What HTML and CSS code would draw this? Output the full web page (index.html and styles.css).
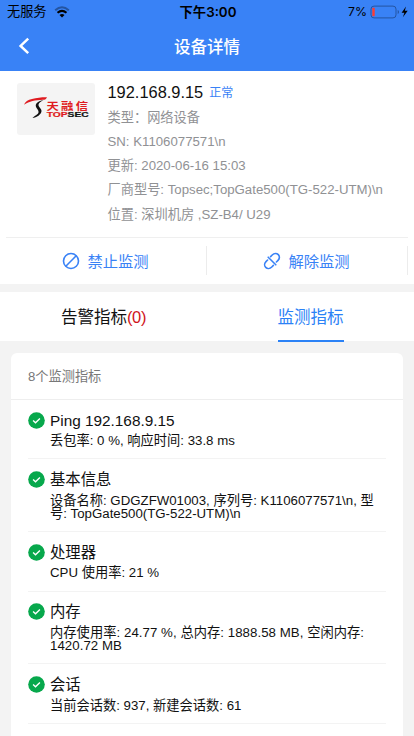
FILE: index.html
```html
<!DOCTYPE html>
<html lang="zh-CN">
<head>
<meta charset="utf-8">
<meta name="viewport" content="width=device-width, initial-scale=1">
<title>设备详情</title>
<link rel="stylesheet" href="styles.css">
</head>
<body>
<header class="header">
  <div class="status">
    <div class="status-left"><span>无服务</span>
      <svg width="16" height="12" viewBox="0 0 16 12" fill="none"><path d="M1.2 4.2Q8-1.8 14.8 4.2" stroke="#2455a2" stroke-width="2"/><path d="M3.5 6.8Q8 3 12.5 6.8" stroke="#000" stroke-width="2"/><path d="M5.5 9Q8 7 10.5 9L8 11.6Z" fill="#000"/></svg>
    </div>
    <div class="status-time">下午3:00</div>
    <div class="status-right"><span>7%</span>
      <svg width="39" height="14" viewBox="0 0 39 14"><rect x="1" y="1.1" width="25" height="11.8" rx="3" fill="none" stroke="#2455a2" stroke-width="1"/><rect x="2.3" y="2.8" width="2.4" height="8.4" rx=".6" fill="#ff3b30"/><path d="M27.7 5v4q1.3-.5 1.3-2t-1.3-2z" fill="#2455a2"/><path d="M36 1.5l-4.4 6.2h2.8L32.9 12.2l4.8-6.4h-2.9z" fill="#000"/></svg>
    </div>
  </div>
  <div class="nav">
    <svg class="back" width="12" height="18" viewBox="0 0 12 18"><path d="M10.2 1.6L2.6 8.9l7.6 7.3" fill="none" stroke="#fff" stroke-width="2.5"/></svg>
    <h1>设备详情</h1>
  </div>
</header>

<section class="device">
  <div class="logo">
    <svg width="78" height="52" viewBox="0 0 78 52">
      <path d="M7 21.8C8 18.5 11 17 15 16C20 14.7 26 14 30 14.2C29.5 15.8 28 16.8 26 16.8C18 17 12.5 18.5 7 21.8Z" fill="#df1b20"/>
      <path d="M26.5 17C21 18 18.5 20.5 18.8 23C19.2 25.5 22 27 21.5 29.5C21 31.8 17.5 32.5 15.5 35C19.5 34.5 24.5 31.5 24.5 28C24.5 25.5 21.3 24 21.5 21.5C21.7 19.5 24.5 18.5 26.5 17Z" fill="#111"/>
      <text class="brand-cn" transform="translate(29.5 27.3) scale(1.24 1)">天融信</text>
      <text class="brand-en" x="29.7" y="34.2" textLength="42" lengthAdjust="spacingAndGlyphs"><tspan class="brand-red">TOP</tspan><tspan>SEC</tspan></text>
    </svg>
  </div>
  <div class="info">
    <div class="ip"><span>192.168.9.15</span><span class="state">正常</span></div>
    <p>类型：网络设备</p>
    <p>SN: K1106077571\n</p>
    <p>更新: 2020-06-16 15:03</p>
    <p>厂商型号: Topsec;TopGate500(TG-522-UTM)\n</p>
    <p>位置: 深圳机房 ,SZ-B4/ U29</p>
  </div>
</section>

<div class="actions">
  <a class="action"><svg width="18" height="18" viewBox="0 0 18 18" fill="none" stroke="#3982f6" stroke-width="1.6"><circle cx="9" cy="9" r="7.5"/><path d="M3.8 14.2L14.2 3.8"/></svg><span>禁止监测</span></a>
  <a class="action"><svg width="18" height="18" viewBox="0 0 18 18" fill="none" stroke="#3982f6" stroke-width="1.6" stroke-linecap="round"><path d="M7.6 4.6l1.6-1.6c2-2 4.6-1.9 6.1-.4s1.5 4-.3 5.8l-1.6 1.6"/><path d="M10.4 13.4l-1.6 1.6c-2 2-4.6 1.9-6.1.4s-1.5-4 .3-5.8l1.6-1.6"/><path d="M5.2 5.2l7.6 7.6"/></svg><span>解除监测</span></a>
</div>

<nav class="tabs">
  <div class="tab"><span>告警指标<b class="count">(0)</b></span></div>
  <div class="tab active"><span>监测指标</span></div>
</nav>

<svg class="defs" width="0" height="0"><symbol id="ok" viewBox="0 0 17 17"><circle cx="8.5" cy="8.5" r="8.3" fill="#07a84c"/><path d="M5.1 8.6l2.4 2.2 4.4-4.2" fill="none" stroke="#fff" stroke-width="1.4"/></symbol></svg>

<main class="card">
  <div class="card-head">8个监测指标</div>
  <div class="metric"><svg class="ok"><use href="#ok"/></svg><div><h2>Ping 192.168.9.15</h2><p>丢包率: 0 %, 响应时间: 33.8 ms</p></div></div>
  <div class="metric"><svg class="ok"><use href="#ok"/></svg><div><h2>基本信息</h2><p>设备名称: GDGZFW01003, 序列号: K1106077571\n, 型<br>号: TopGate500(TG-522-UTM)\n</p></div></div>
  <div class="metric"><svg class="ok"><use href="#ok"/></svg><div><h2>处理器</h2><p>CPU 使用率: 21 %</p></div></div>
  <div class="metric"><svg class="ok"><use href="#ok"/></svg><div><h2>内存</h2><p class="wide">内存使用率: 24.77 %, 总内存: 1888.58 MB, 空闲内存:<br>1420.72 MB</p></div></div>
  <div class="metric"><svg class="ok"><use href="#ok"/></svg><div><h2>会话</h2><p>当前会话数: 937, 新建会话数: 61</p></div></div>
  <div class="rest"></div>
</main>
</body>
</html>
```
FILE: styles.css
```css
* { box-sizing: border-box; }
html, body { height: 736px; overflow: hidden; }
body { margin: 0; background: #f3f3f3; color: #111; font-family: "Liberation Sans", "Noto Sans CJK SC", sans-serif; }
h1, h2, p { margin: 0; font-weight: 400; white-space: nowrap; }
svg { display: block; flex: none; }
.defs { position: absolute; }

.header { height: 71px; background: #3982f6; }
.status { height: 24px; display: grid; grid-template-columns: 1fr auto 1fr; align-items: center; padding: 0 5px 0 7px; color: #000; font-size: 13.2px; line-height: 24px; }
.status-left, .status-right { display: flex; align-items: center; gap: 7px; }
.status-right { justify-content: flex-end; gap: 3px; font-family: Inter, sans-serif; font-size: 12.3px; }
.status-time { font-family: Inter, "Noto Sans CJK SC", sans-serif; font-size: 13.3px; font-weight: 600; }
.nav { height: 44px; display: grid; grid-template-columns: 1fr auto 1fr; align-items: center; }
.back { margin-left: 18px; }
.nav h1 { color: #fff; font-size: 16.5px; font-weight: 500; }

.device { height: 166px; background: #fff; display: flex; padding: 12px 17px 0; }
.logo { width: 78px; height: 52px; background: #f4f4f4; border-radius: 3px; flex: none; }
.brand-cn { font: 700 10px "Noto Sans CJK SC", sans-serif; letter-spacing: 1.8px; fill: #df1b20; }
.brand-en { font: 700 6.8px "Liberation Sans", sans-serif; fill: #111; stroke: #111; stroke-width: .2px; }
.brand-red { fill: #df1b20; stroke: #df1b20; }
.info { margin: -4px 0 0 12.5px; color: #909194; font-size: 13.22px; line-height: 24.3px; }
.info p { height: 24.3px; }
.ip { height: 26.5px; display: flex; align-items: center; gap: 6px; color: #111; font-size: 16.4px; white-space: nowrap; }
.state { color: #3982f6; font-size: 12px; padding-top: 1px; }

.actions { height: 47px; display: grid; grid-template-columns: 201px 201px; padding: 0 6px; background: linear-gradient(#efefef, #efefef) 6px 0 / 402px 1px no-repeat #fff; }
.action { height: 29px; margin-top: 9px; display: flex; align-items: center; justify-content: center; gap: 8px; border-right: 1px solid #ececec; color: #3982f6; font-size: 15.3px; }
.action svg { margin-top: 1px; }
.action span { margin: -2px 1px 0 -1px; }

.tabs { margin-top: 8px; height: 49px; background: #fff; display: grid; grid-template-columns: 1fr 1fr; }
.tab { display: flex; justify-content: center; font-size: 16.5px; line-height: 50px; white-space: nowrap; }
.count { font-weight: 400; color: #d0151b; letter-spacing: -.4px; }
.active { color: #2b82f6; }
.active span { height: 50px; border-bottom: 2.5px solid #2b82f6; }

.card { margin: 12px 11px 0; background: #fff; border-radius: 6px 6px 0 0; }
.card-head { height: 47px; padding-left: 17px; border-bottom: 1px solid #eee; color: #777; font-size: 13.2px; line-height: 48px; }
.metric { margin: 0 17px; padding: 8.6px 0 10.8px; border-bottom: 1px solid #f3f3f3; display: flex; gap: 5px; }
.ok { width: 17px; height: 17px; margin-top: 3.3px; }
.metric h2 { font-size: 15.35px; line-height: 24px; }
.metric p { margin-top: 1.6px; font-size: 13.25px; line-height: 13.4px; }
.metric .wide { letter-spacing: .05px; }
.rest { height: 40px; }
```
